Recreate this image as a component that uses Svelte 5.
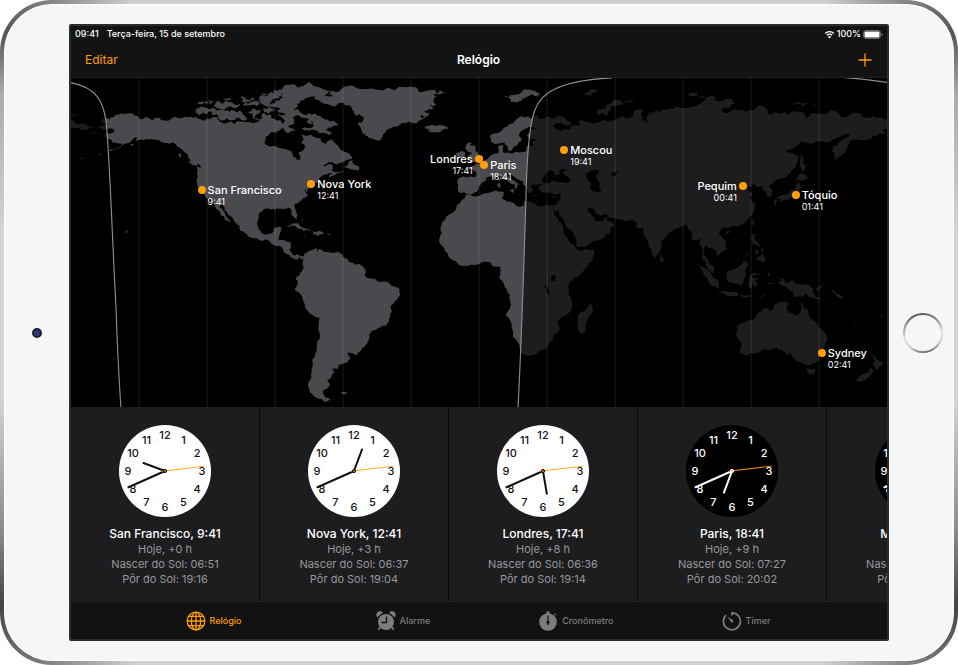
<script lang="ts">
	type City = {
		name: string;
		time: string;
		lon: number;
		lat: number;
		side: "left" | "right";
	}

	type Clock = {
		city: string;
		time: string;
		offset: string;
		sunrise: string;
		sunset: string;
		night?: boolean;
	}

	const cities: City[] = [
		{ name: "San Francisco", time: "9:41", lon: -122.4, lat: 37.8, side: "right" },
		{ name: "Nova York", time: "12:41", lon: -74, lat: 40.7, side: "right" },
		{ name: "Londres", time: "17:41", lon: -0.1, lat: 51.5, side: "left" },
		{ name: "Paris", time: "18:41", lon: 2.3, lat: 48.9, side: "right" },
		{ name: "Moscou", time: "19:41", lon: 37.6, lat: 55.8, side: "right" },
		{ name: "Pequim", time: "00:41", lon: 116.4, lat: 39.9, side: "left" },
		{ name: "Tóquio", time: "01:41", lon: 139.7, lat: 35.7, side: "right" },
		{ name: "Sydney", time: "02:41", lon: 151.2, lat: -33.9, side: "right" },
	]

	const clocks: Clock[] = [
		{ city: "San Francisco", time: "9:41", offset: "Hoje, +0 h", sunrise: "06:51", sunset: "19:16" },
		{ city: "Nova York", time: "12:41", offset: "Hoje, +3 h", sunrise: "06:37", sunset: "19:04" },
		{ city: "Londres", time: "17:41", offset: "Hoje, +8 h", sunrise: "06:36", sunset: "19:14" },
		{ city: "Paris", time: "18:41", offset: "Hoje, +9 h", sunrise: "07:27", sunset: "20:02", night: true },
		{ city: "Moscou", time: "19:41", offset: "Hoje, +10 h", sunrise: "06:02", sunset: "18:47", night: true },
	]

	const tabs = ["Relógio", "Alarme", "Cronômetro", "Timer"]
	let selected = $state("Relógio")

	// Map extent in degrees
	const TOP = 87.35
	const HEIGHT = 145.15
	const meridians = [-150, -120, -90, -60, -30, 0, 30, 60, 90, 120, 150]
	const hours = [1, 2, 3, 4, 5, 6, 7, 8, 9, 10, 11, 12]
	const SECOND = 83

	const left = (lon: number) => `${((lon + 180) / 360) * 100}%`
	const top = (lat: number) => `${((TOP - lat) / HEIGHT) * 100}%`
	const dialX = (h: number) => 37 * Math.sin((h * Math.PI) / 6)
	const dialY = (h: number) => -36 * Math.cos((h * Math.PI) / 6)
	const hourAngle = (time: string) => {
		const [h, m] = time.split(":").map(Number)
		return (h % 12) * 30 + m / 2
	}
	const minuteAngle = (time: string) => Number(time.split(":")[1]) * 6

	// Coastlines as "lon,lat" pairs
	const land = [
		// North and Central America
		"-168,65.6 -166,66.3 -162,66.2 -163.5,67 -166.5,68.3 -163,69.2 -161,70.3 -156.6,71.3 -152,70.8 -147,70.2 -141,69.7 -136,69 -133,69.6 -129,70 -127,70.2 -124,69.4 -120,69.4 -115,68.9 -114,68 -109,68 -108,67 -107,68 -104,68 -98,67.8 -97,68.5 -94,69 -96,70 -94.5,71.9 -92,71 -91.5,69.5 -90,69 -88,68.8 -87,67.3 -86,67.5 -85,69.5 -82,69.5 -81.5,68 -82,67 -84,66.3 -87,65.3 -88,64.2 -91,63.5 -94,61.5 -94.7,58.8 -92.5,57 -88,56.5 -83,55.2 -82.2,53 -80.5,51.3 -79.2,51.2 -78.8,53 -79.5,54.7 -77,56 -76.6,57.2 -78.5,58.8 -77.5,60 -78,62.4 -74,62.3 -70,61 -69.5,59 -67.5,58.3 -65,60.2 -63.5,58.8 -62,57 -60,55 -57.2,53.8 -55.8,52.2 -58.5,51.3 -60,50.2 -66.5,50.2 -69,48.5 -67,48.9 -65,49.2 -64.5,47.8 -65,46.8 -64,46 -61.3,45.4 -60,46.8 -60,45.9 -63.5,44.6 -65.8,43.5 -66.2,44.4 -64.8,45.3 -67,45 -70,43.7 -70.8,42.6 -70,41.8 -71.5,41.4 -74,40.7 -74.1,39.7 -75.2,38.7 -76,37 -76.3,39 -76.6,37 -75.7,35.3 -78,33.9 -81,32 -81.4,30.5 -80.1,27 -80.4,25.2 -81.7,26 -82.8,27.8 -82.7,29 -84,30.1 -85.5,29.8 -89.5,30.2 -89.3,29.2 -91.5,29.4 -94.5,29.5 -97.2,27.7 -97.5,25 -97.8,22.4 -96.2,19.2 -94.5,18.2 -92,18.6 -90.7,19.5 -90.4,21 -88,21.6 -86.9,21.4 -87.6,19.5 -88.2,17.5 -88.7,15.8 -86,15.9 -83.2,15 -83.7,11.5 -82.2,9.2 -79.8,9.5 -77.5,8.6 -78,7.2 -79,8.8 -80,7.4 -80.8,7.3 -83,8.3 -84.7,9.7 -85.8,10.3 -87.5,13 -91.5,14 -94,16.1 -96.5,15.7 -99.8,16.8 -102,17.9 -105.4,20 -105.5,22 -108.5,25.5 -112.2,29 -113,31.2 -114.8,31.7 -113,29 -111,25.6 -109.5,23.2 -112,24.8 -112.2,26 -114.2,27.2 -114,28 -115.7,29.5 -117.1,32.5 -118.5,34 -120.6,34.6 -122.4,37.5 -124.3,40.3 -124,43.5 -124,46.5 -124.7,48.4 -122.5,48 -124,49.5 -127.5,51 -128.5,53.5 -130.3,54.8 -131,56 -133,57 -135,59 -137.5,58.8 -141,59.9 -145,60.4 -148,60 -151.5,59.3 -150.5,61 -152,61 -154,59 -158,57 -162,55.2 -164.8,54.6 -160,56 -157.3,58.7 -159,58.5 -162,58.7 -162,60 -165.5,61.5 -164.5,63.1 -161,63.6 -161,64.6 -166,64.5",
		// Arctic Archipelago
		"-117,69.9 -113,68.6 -109,68.7 -105,69 -101.5,69.5 -104,71 -105,72.8 -108,73 -110,72.5 -114,73.2 -118,72.5 -117,71 -112,70.5",
		"-125,72 -123,71.2 -120,71.6 -116,73 -117.5,74.2 -121,74.5 -124.5,74",
		"-89,71 -87,70 -82,69.8 -77,69.6 -73,67.9 -73,66 -78,65.3 -77,64.3 -73,64.5 -70,63 -66,62 -65,63 -68,64.2 -65,65.5 -62,66.7 -67,69 -70,70.6 -75,71.8 -80,73.6 -85,73.7 -89,73.2 -85,72",
		"-97,71.7 -99,70 -96,69 -99,69 -102,72 -100,73.8 -96,73.5",
		"-95,72.2 -92,72.7 -90,73.8 -95,74",
		"-92,74.6 -80,74.7 -80,75.8 -89,76.4 -97,76.7 -92,75.8",
		"-90,76.5 -79,76.2 -77,78 -75,79 -67,80.5 -61,82.3 -70,83.1 -80,83 -87,82.2 -91,81.5 -86,80.5 -87,79 -85,78 -89,77.5",
		"-97,78.2 -88,78.5 -87,80 -92,81.2 -96,80.5 -93,79.5",
		"-117,75.3 -111,74.5 -106,75 -105.5,76 -109,76.6 -113,76 -116,76.6",
		"-124,76 -117,76.5 -120,77.5 -116,77.6 -122,77",
		"-104,75.2 -98,75 -97,76.4 -101,76.6",
		"-113,78.3 -109,78.1 -110,78.7",
		"-104,78.2 -99,78 -100,78.8 -105,79.3",
		"-105,77.3 -101,77.6 -104,78",
		"-98,77.6 -93,77.5 -95,78",
		"-87,65.8 -84.5,63 -80.5,64 -84,65.8",
		"-76,68.3 -73,67.8 -75,67.2",
		"-59.3,47.8 -55.8,47 -53,46.7 -53,48.5 -55.8,49.8 -55.6,51.5 -57.3,50.5",
		"-64.5,49.9 -61.8,49.2 -63,49.3",
		"-123.5,48.4 -125.5,48.9 -128.2,50.7 -125.5,50.2",
		"-133,54 -131.5,52.2 -131.5,54",
		"-154.5,57.3 -152.2,57.6 -153,58.3",
		"-168.5,53.2 -166.2,54 -167,53.3",
		"-171,63.6 -169,63.1 -171.5,63.2",
		"-176.5,51.7 -174,52.2 -174,52",
		// Greenland
		"-73,78.2 -68,76 -62,76.2 -58,75.3 -55,72.5 -54.5,70.8 -51,70.4 -51,69 -53.6,67.5 -52,64.5 -50,62 -48,60.8 -43.5,59.9 -42.5,62 -40,65 -36,66 -31,68.1 -25,69 -22,70.3 -26,70.8 -22,71.8 -24,73 -20,74 -22,75.2 -19,76 -20,77.6 -18,79.7 -20,80.3 -14,81.5 -22,82 -30,83.5 -40,83.1 -50,82.4 -62,81.3 -66,80.2 -64,79.2",
		// Caribbean
		"-84.8,21.9 -82.5,23.1 -79.5,22.8 -74.2,20.2 -77.5,19.9 -78,20.8 -82,22.4",
		"-73.8,19.9 -70,19.8 -68.4,18.6 -71,17.8 -74.3,18.4 -72.5,18.8",
		"-78.3,18.4 -76.3,18.1 -77.2,17.8",
		"-67.2,18.4 -65.7,18.3 -66,18",
		"-78.3,25 -77.8,24 -77.6,24.8",
		"-156,20.2 -155,19.5 -155.8,19",
		// South America
		"-77.5,8.6 -75.5,10.6 -74,11.3 -71.7,12.4 -71.5,10.5 -70,12 -68,10.6 -66,10.5 -62,10.7 -60,8.5 -57,6 -52,4.8 -50,1.5 -50.5,0 -48,-1 -44,-2.6 -40,-2.9 -37,-4.9 -35.3,-5.4 -34.8,-8 -37,-11 -39,-13 -39.3,-18 -41,-22 -44.5,-23 -48.5,-26 -48.7,-28.5 -50.5,-31 -52,-33 -54.5,-34.9 -58.3,-34 -57.2,-35.5 -56.8,-36.5 -58,-38.2 -62,-39 -62.3,-40.8 -65,-41 -63.7,-42.6 -65.5,-45 -67.5,-46.3 -65.8,-47.8 -69,-51 -68.3,-52.5 -68,-53.5 -65.2,-54.7 -68,-55.5 -71.5,-53.8 -74.5,-51.5 -75.5,-48 -74,-45 -73.8,-42 -73.3,-39 -73.6,-37 -71.5,-33 -71.5,-30 -70.3,-25 -70.3,-18.4 -75.8,-15 -77,-12 -79.8,-7 -81.3,-5.5 -80,-3.3 -80.9,-1 -78.8,1.5 -77.3,4 -77.5,7",
		"-61,-51.6 -58,-51.4 -59,-52.2",
		// Eurasia
		"25.5,71 31,70.2 33,69.3 41,67.6 40,66.3 33,66.6 34.8,64.4 37,63.9 37,65 40,64.6 40.5,66 44,66 44,68.4 46.5,68 53.5,68.3 60,68.8 61,69.8 65,69.2 69,68.8 67,70 68,72.5 72.5,72.8 72,69 74,67.5 74,70 75,72.2 80,72.4 81,73.6 87,75 98,76.3 104,77.6 113,76 107,73.3 113,73.7 119,73 127,73.5 129,71.3 133,71.7 140,72.6 150,71.6 160,69.8 170,69.7 171,70 176,69.8 180,69 180,65 177.5,64.7 179,62.5 174,61.8 170,60 164,59.9 163,57.8 162,56 160,53 156.8,51.1 155.7,55 156,57 160,60 163.5,62.4 160,61.8 155,59.3 149,59.5 142,59.2 138,56 135.2,54.8 141,53 140.5,50 138,46.5 135,43.5 131,42.7 129.7,41 127.5,39.7 129.3,37 129,35.2 126.5,34.5 126.7,37 125,38 125,39.6 121.5,39 122,40.6 118,39.1 119,37.4 122.5,37.3 119.4,35 121.8,31.8 121.9,29.5 119,25.5 116.5,23 113,22 110.5,21.3 108,21.6 105.8,19 108.8,15.5 109.2,12 106.8,10.4 104.8,8.7 105,10 102.5,12.2 100.9,12.8 100,13.4 99.3,9.5 101,6.8 103.4,4.3 104.2,1.3 103.4,1.4 101,3 100.3,6 98.3,8.3 98.7,11.5 97.6,16.5 94.4,16 94,18.8 91.8,22.4 89,21.8 86.8,21 85,19.5 82.2,16.7 80.2,15.5 80.2,12 79.3,10 77.5,8.1 76.2,10.5 74.7,13.5 73,17.5 72.7,21 70.5,20.9 69,22.3 70,23 67.3,24.8 61.5,25.1 57.3,25.8 56.5,27.1 54,26.6 51.5,27.9 50,30 48,30 48.3,28.3 50.1,26.5 50.8,24.8 51.4,26 51.6,24.2 54,24.1 56.3,26.2 56.5,24.5 59.8,22.5 58,20 57.5,18.8 55,17 52,15.6 45,12.8 43.4,12.8 42.7,16.5 39.2,21 37,25 34.8,29.3 34.3,27.9 32.4,30 32.3,31.2 34.2,31.3 35.1,33 36,35.8 36,36.8 32.5,36.1 30.6,36.8 28,36.7 26.4,38.5 26.5,40 29,41 33,42 36,41.6 38,41 41.5,41.5 39,44 37,45.3 39.2,47.1 35,46.3 36.5,45.4 33.7,44.4 32.6,45.4 33.5,46.1 31,46.6 28.7,44 27.8,42.5 29,41.2 26.5,40.6 23.5,40.3 22.9,39.2 24,38 22.9,36.6 21.5,37 21.2,38.5 19.4,40.5 19.4,41.8 16,43.5 14,45 13.7,45.6 12.3,45.3 12.5,44 14,42.6 16,41.8 18.4,40.1 17,40.5 16.5,38.8 15.7,38 16,40 14,40.9 10.5,42.8 8.8,44.4 7,43.6 3.2,43.2 3,41.9 -0.2,39.5 -0.5,38 -2,36.8 -5.5,36.1 -6.5,37 -8.9,37 -9.4,38.8 -8.8,43.2 -2,43.4 -1.3,44.5 -1.2,46 -4.6,48 -1.5,48.7 -1.7,49.7 1.5,50.2 2,51 4,51.8 5,53.2 8.5,53.8 8.2,57 10.6,57.6 10.5,55.5 11,54.1 14.2,53.9 18.7,54.6 21,55.2 21.3,57.5 24,57.2 23.6,59.2 30,59.9 25,60.1 22,60.5 21.4,62.5 25.2,65 22,65.7 17.5,62 18.8,60 16.5,57.5 14.3,55.5 12.8,55.5 11.2,59 9,58.5 7,58 5.2,59.5 5,62 9.5,63.6 13,66.5 16,68.7 20,69.9",
		"-180,69 -175,67.3 -170,66 -173,64.4 -177,65.5 -180,65",
		// European and Russian islands
		"-5.5,50 -3.5,50.3 1.3,51 1.7,52.7 0.2,53 -1.5,55 -2,57.6 -4,57.7 -3.1,58.6 -5,58.6 -6.2,56.7 -4.8,54.8 -3,54 -4.5,53.2 -5.2,51.8 -3,51.5",
		"-10,51.8 -6.4,52.2 -6,54.5 -7.5,55.3 -10,54.2",
		"-24,65.5 -22,66.4 -16,66.5 -13.6,65 -18,63.4 -22.6,63.9 -22,64.8",
		"11,79 14,77 17,76.6 20,78.5 27,80.1 18,80.3 15,79.8",
		"52,71.2 56,70.7 57,72.5 61,75.2 68.5,76.8 66,77 58,76 53.5,73.5",
		"46,80.6 50,80.3 54,80.8 48,81",
		"92,79.5 98,78.8 105,78.5 102,79.4 96,81.1",
		"137,75.5 143,74.9 150,75 146,75.7 139,76",
		"140,73.5 143,73.3 142,73.8",
		"178.7,71 180,70.9 180,71.5",
		"-180,71.5 -177.6,71.2 -180,70.9",
		"142,54.2 143.2,52 143,49.2 144.5,49 142.7,46 142,48 141.8,52",
		"8.2,40.8 9.6,41 9.5,39.2 8.5,39",
		"8.7,42.5 9.4,42.8 9.3,41.5",
		"12.5,38 15.5,38.2 15.1,36.7",
		"23.6,35.5 26.2,35.2 24,35.1",
		"32.4,35 34.4,35.6 33.2,34.7",
		// Japan
		"140,42.5 141.8,45.4 145.2,43.5 143.2,42 141,42.5 140.2,41.5",
		"141,41.4 142,39.6 140.9,36 140,35 137,34.6 135.8,33.5 132.5,34.2 131,34.2 135.5,35.6 137.2,37.3 139.5,38.2 140,40.5",
		"130,33.5 131.8,33.5 131,31.3 130.2,31.5",
		"132.5,33.5 134.6,34.1 133.5,33",
		// Africa
		"-5.9,35.8 -2,35.1 5,36.8 10,37.3 11,36.8 10.2,34 15,32.3 18,30.4 20,31 20,32.7 23,32.6 29,30.9 32.3,31.2 32.5,29.9 35.5,24 37.2,21 37.5,18.5 39.7,15.2 43,12 43.3,11.5 51.2,11.9 50.8,9.5 47.9,4.3 42,-1 39.3,-4.8 39.5,-8 40.6,-11 40.6,-15 35,-19.8 35.5,-23.8 32.8,-25.8 32.5,-28.4 30,-31.5 25.7,-34 20,-34.8 18.3,-34 18,-32 15,-26.8 14.4,-22.6 11.8,-17.5 13.7,-11 12.2,-6 9,-1 9.6,2.3 9.5,4 6,4.3 4.3,6.3 1,5.9 -2,4.8 -7.5,4.4 -13,8 -15,11 -17.3,14.7 -16.3,19 -17,21 -14.5,26 -10,29.5 -9.7,31.5 -6.8,34",
		"49.3,-12 50.4,-15.8 47.2,-25 45,-25.5 43.5,-22 44.3,-16.5 47,-15.3",
		// Southern and Southeast Asia
		"79.8,9.5 81.8,7.5 81,6 80,6.2",
		"95.3,5.6 98,4.2 103.5,-0.8 106,-3 105.8,-5.9 102.3,-4 98.7,1.7",
		"105.2,-6.8 108.5,-6.6 112.7,-6.9 114.5,-7.8 114.3,-8.7 108,-7.8",
		"115,-8.2 119,-8.4 122.8,-8.3 120,-9 116,-9",
		"123.5,-10.3 125,-8.8 127.2,-8.4 125,-9.6",
		"109,1.5 111.3,2.6 113,3.2 116.8,7 119,5.2 117.6,3 117.8,0.8 116.2,-3.8 114,-3.5 110.2,-2.9",
		"119.8,0.5 121,1.3 125,1.5 123.8,0.5 120.5,0.4 121,-1 123.3,-0.8 121.5,-2 122.8,-4.3 121.5,-4.5 120.8,-2.8 120.3,-5.5 119.4,-5.3 119,-2.8",
		"127.6,1.7 128.6,0.8 128,-0.8 127.6,0",
		"126.2,-3.2 128,-2.9 130.8,-3.4 128,-3.6",
		"131,-0.8 134,-0.8 135,-3.3 138,-1.6 144.5,-3.9 147.8,-6 147,-6.8 150.8,-10.5 147,-9.6 143.8,-7.6 143,-9.2 141,-9.1 138,-8.3 138.8,-7 135.5,-4.5 133,-4 132,-2.6 134,-2.2",
		"148.5,-5.8 151.8,-4.3 152.2,-4.4 150,-6.3",
		"151,-2.7 153,-4.5 152.2,-3.4",
		"154.7,-5.5 157,-7 161,-9.5 160.5,-9.8 156,-7.2",
		"164,-20.2 167,-22.3 166,-22",
		"177.3,-17.5 178.6,-17.6 178,-18.3",
		"120.5,18.5 122.2,18.4 121.6,16 124,12.8 122,14 120.6,14 119.9,16.3",
		"122,11.8 123.2,11.3 123,9.2 122,10.5",
		"124.4,12.5 125.5,12.2 125,10.2",
		"122,7.7 125.5,9.8 126.4,7.5 125.5,5.8 124,6.8",
		"117.2,8.4 119.5,11.3 119,10",
		"108.7,19.3 111,19.9 109.6,18.2",
		"120.1,23.5 121.8,25.2 120.9,22",
		// Australia and New Zealand
		"113.7,-22.5 114.2,-21.8 117,-20.7 121,-19.5 122.3,-18 123,-16.5 125.5,-14.2 128,-15 129.7,-14.8 130.8,-12.3 132.6,-11.4 136.7,-12 135.5,-14.8 139,-17.3 140.8,-17.5 142.5,-10.8 143.7,-14.3 145.3,-15 146.2,-18.8 149,-20.5 151,-23.5 153.2,-26 153.6,-28.5 152,-32.5 150,-37.2 146.5,-39 143.5,-38.8 140.5,-38 138.5,-35.6 138,-34.5 137,-35.2 137.8,-32.8 135.5,-34.8 134,-32.8 131,-31.5 126,-32.3 123.5,-33.9 120,-34 117.8,-35 115,-34.3 115.7,-31.8 113.5,-26.2 114,-24",
		"144.7,-40.8 148.3,-41 147.8,-43.2 146,-43.6",
		"172.8,-34.5 175.5,-36.8 178.5,-37.7 176.8,-40 175.2,-41.6 173.8,-39.4 174.7,-37.5",
		"172.7,-40.6 174.2,-41.7 172.8,-43.8 170.7,-45.8 168.5,-46.6 166.5,-46 171,-42.8",
	]

	const caspian = "47,45 49,46.3 51,47 53,46.5 53,45 51,44.5 52.5,42 54,41 53,39.8 53.8,37 50,37.3 49,38.5 49.5,40.5 47.5,43"
	const lakes = [
		"59,46 61.5,46.3 60.5,44.2 58.5,44",
		"32,0.2 34,0.2 33.5,-2.4 32,-2",
		"29.3,-3.5 30.8,-8.4 30.4,-8.5 29.1,-5",
	]

	// Breaks straight runs of coast into small bays and capes, rougher in the far north
	const roughen = (line: string) => {
		let points = line.split(" ").map(pair => pair.split(",").map(Number))
		for (let pass = 0; pass < 2; pass++) {
			points = points.flatMap(([x, y], i) => {
				const [nx, ny] = points[(i + 1) % points.length]
				if (Math.abs(x) === 180 && x === nx) return [[x, y]]
				const noise = Math.sin(x * 12.9 + y * 78.2 + nx * 37.7 + ny * 9.1)
				const bend = noise * (y > 68 ? 0.26 : 0.14)
				return [[x, y], [(x + nx) / 2 - (ny - y) * bend, (y + ny) / 2 + (nx - x) * bend]]
			})
		}
		return points.map(([x, y]) => `${x.toFixed(2)},${y.toFixed(2)}`).join(" ")
	}

	const coasts = land.map(roughen)
	const seas = [caspian, ...lakes].map(roughen)
</script>

{#snippet coast()}
	<g transform="scale(1 -1)">
		{#each coasts as points}
			<polygon {points} />
		{/each}
	</g>
{/snippet}

<div class="tablet">
	<div class="bezel">
		<div class="side"><span class="camera"></span></div>

		<main class="screen">
			<div class="status">
				<span>09:41</span>
				<span>Terça-feira, 15 de setembro</span>
				<span class="power">
					<svg width="11" height="9" viewBox="0 0 11 9" aria-hidden="true">
						<path d="M1 3.4a6.4 6.4 0 0 1 9 0M2.8 5.3a3.8 3.8 0 0 1 5.4 0" fill="none" stroke="#fff" stroke-width="1.3" />
						<path d="M5.5 8.4 3.9 6.7a2.3 2.3 0 0 1 3.2 0z" fill="#fff" />
					</svg>
					100%
					<svg width="20" height="9" viewBox="0 0 20 9" aria-hidden="true">
						<rect x=".5" y=".5" width="17" height="8" rx="2" fill="none" stroke="#66666a" />
						<rect x="1.5" y="1.5" width="15" height="6" rx="1" fill="#fff" />
						<path d="M18.5 3v3q1.2-.5 1.2-1.5T18.5 3" fill="#77777a" />
					</svg>
				</span>
			</div>

			<header>
				<button class="edit">Editar</button>
				<h1>Relógio</h1>
				<button class="add" aria-label="Adicionar">
					<svg width="14" height="14" viewBox="0 0 14 14">
						<path d="M7 .5v13M.5 7h13" stroke="currentColor" stroke-width="1.3" />
					</svg>
				</button>
			</header>

			<section class="map">
				<svg class="world" viewBox="-180 -87.35 360 145.15" aria-hidden="true">
					<defs>
						<clipPath id="day">
							<path d="M-180-88V-85.3C-168-83-165.8-76-164.6-68.8C-163-55-162-20-160.1 15C-159.5 35-158.5 50-158 58H17.2C18.5 35 19 20 20.7-33.5C21-50 22-62 23.4-68.8C25-78 30-86 58.7-88z" />
						</clipPath>
					</defs>
					<g fill="#1d1d1f">{@render coast()}</g>
					<g fill="#4a494e" clip-path="url(#day)">{@render coast()}</g>
					<g transform="scale(1 -1)">
						{#each seas as points}
							<polygon {points} />
						{/each}
					</g>
					{#each meridians as lon}
						<path d="M{lon}-88V58" stroke="#fff" stroke-opacity=".11" stroke-width=".45" />
					{/each}
					<g fill="none" stroke="#8e8e8e" stroke-width=".5">
						<path d="M-180-85.3C-168-83-165.8-76-164.6-68.8C-163-55-162-20-160.1 15C-159.5 35-158.5 50-158 58" />
						<path d="M17.2 58C18.5 35 19 20 20.7-33.5C21-50 22-62 23.4-68.8C25-78 30-86 58.7-87.4" />
						<path d="M150-88.2Q166-87.6 180-85.4" />
					</g>
				</svg>

				{#each cities as city}
					<div class="pin {city.side}" style:left={left(city.lon)} style:top={top(city.lat)}>
						<div class="label">
							<b>{city.name}</b>
							<span>{city.time}</span>
						</div>
					</div>
				{/each}
			</section>

			<section class="cards">
				{#each clocks as clock}
					<article>
						<svg class="dial" class:night={clock.night} viewBox="-46 -46 92 92" aria-hidden="true">
							<circle r="46" />
							{#each hours as h}
								<text x={dialX(h)} y={dialY(h) + 4}>{h}</text>
							{/each}
							<g class="hands">
								<path d="M0 0V-23" transform="rotate({hourAngle(clock.time)})" />
								<path d="M0 0V-40" transform="rotate({minuteAngle(clock.time)})" />
							</g>
							<path class="second" d="M0 3V-40" transform="rotate({SECOND})" />
							<circle class="hub" r="1.6" />
						</svg>
						<h2>{clock.city}, {clock.time}</h2>
						<p>{clock.offset}</p>
						<p>Nascer do Sol: {clock.sunrise}</p>
						<p>Pôr do Sol: {clock.sunset}</p>
					</article>
				{/each}
			</section>

			<nav>
				{#each tabs as tab}
					<button class:active={selected === tab} onclick={() => selected = tab}>
						<svg width="20" height="20" viewBox="0 0 20 20" aria-hidden="true">
							{#if tab === "Relógio"}
								<g fill="none" stroke="currentColor" stroke-width="1.3">
									<circle cx="10" cy="10" r="8.8" />
									<ellipse cx="10" cy="10" rx="4.6" ry="8.8" />
									<path d="M10 1v18M1 10h18M2.6 5.4h14.8M2.6 14.6h14.8" />
								</g>
							{:else if tab === "Alarme"}
								<g fill="currentColor">
									<circle cx="10" cy="11" r="8" />
									<path d="M1.3 6.2A3.3 3.3 0 0 1 6.9 1.6zM18.7 6.2A3.3 3.3 0 0 0 13.1 1.6z" />
									<path d="M4 16l-1.6 2.9M16 16l1.6 2.9" stroke="currentColor" stroke-width="1.6" />
								</g>
								<path d="M10.5 5.5v6H5.5" fill="none" stroke="#121212" stroke-width="1.4" />
							{:else if tab === "Cronômetro"}
								<g fill="currentColor">
									<circle cx="10" cy="11" r="8.8" />
									<path d="M8.3.5h3.4v2.5H8.3zM16 3.4l1-1 1.1 1.1-1 1z" />
								</g>
								<path d="M10 4.5v9.5" stroke="#121212" stroke-width="1.2" />
								<circle cx="10" cy="11.2" r="1.5" fill="#121212" />
							{:else}
								<g fill="none" stroke="currentColor" stroke-width="1.7">
									<path d="M10 4.5V1.8A8.5 8.5 0 1 1 4 4.2" />
								</g>
								<path d="M5.6 5.6l5.6 3.9a1.4 1.4 0 0 1-1.8 1.9z" fill="currentColor" />
							{/if}
						</svg>
						{tab}
					</button>
				{/each}
			</nav>
		</main>

		<div class="side end"><button class="home" aria-label="Início"></button></div>
	</div>
</div>

<style>
	:global(body) {
		margin: 0;
		background: #fff;
	}

	.tablet {
		padding: 4px;
		border-radius: 52px;
		background:
			linear-gradient(to right, transparent 0 3%, #8a8a8c 6%, #cfcfd1 14% 86%, #8a8a8c 94%, transparent 97%),
			linear-gradient(to bottom, #777, #555 5%, #aaa 14%, #d4d4d6 35% 60%, #8a8a8a 80%, #444 91%, #777);
		font-family: Inter, Roboto, "Liberation Sans", sans-serif;
		color: #fff;
	}

	.bezel {
		display: grid;
		grid-template-columns: 64px minmax(0, 1fr) 64px;
		padding: 19px 0;
		border: 1px solid #fff;
		border-radius: 48px;
		background: #f4f6f8;
	}

	.side {
		display: flex;
		align-items: center;
		justify-content: center;
	}

	.end {
		padding-left: 4px;
	}

	.camera {
		width: 6px;
		height: 6px;
		border: 2px solid #1d1f2c;
		border-radius: 50%;
		background: #2c3c78;
	}

	.home {
		width: 40px;
		height: 40px;
		padding: 0;
		border: 2px solid transparent;
		border-radius: 50%;
		background:
			linear-gradient(#f4f6f8, #f4f6f8) padding-box,
			linear-gradient(170deg, #3c3c3e, #8a8a8c 25%, #e2e2e4 55%, #cfcfd1 75%, #4c4c4e) border-box;
	}

	.screen {
		overflow: hidden;
		border: 2px solid #2b2d2d;
		border-radius: 2px;
		background: #131313;
	}

	button {
		font: inherit;
		cursor: pointer;
	}

	.status {
		display: flex;
		gap: 8px;
		padding: 0 4px;
		font-size: 9px;
		font-weight: 500;
		line-height: 16px;
	}

	.power {
		display: flex;
		align-items: center;
		gap: 2px;
		margin-left: auto;
	}

	header {
		display: grid;
		grid-template-columns: 1fr auto 1fr;
		align-items: center;
		height: 35px;
		padding: 0 15px 0 14px;
		border-bottom: 1px solid #1f1f1f;
	}

	header button {
		padding: 0;
		border: 0;
		background: none;
		color: #ff9f0a;
		font-size: 12px;
	}

	.edit {
		justify-self: start;
	}

	.add {
		display: flex;
		justify-self: end;
	}

	h1 {
		margin: 0;
		font-size: 12px;
		font-weight: 600;
	}

	.map {
		position: relative;
		background: #000;
	}

	.world {
		display: block;
		width: 100%;
	}

	.pin {
		position: absolute;
		width: 8px;
		height: 8px;
		margin: -4px 0 0 -4px;
		border-radius: 50%;
		background: #ff9f0a;
	}

	.label {
		position: absolute;
		top: -2px;
		left: 10px;
		font-size: 9px;
		line-height: 11px;
		white-space: nowrap;
	}

	.left .label {
		right: 10px;
		left: auto;
		text-align: right;
	}

	.label b {
		display: block;
		font-size: 11px;
		font-weight: 500;
		line-height: 12px;
	}

	.cards {
		display: flex;
		overflow: hidden;
		background: #1d1d1f;
	}

	article {
		box-sizing: border-box;
		flex: 0 0 189px;
		padding: 18px 0 14px;
		border-right: 1px solid #0b0b0c;
		text-align: center;
	}

	.dial {
		display: block;
		width: 92px;
		margin: 0 auto 9px;
		fill: #fff;
	}

	.dial text {
		fill: #111;
		font-size: 11px;
		font-weight: 500;
		text-anchor: middle;
	}

	.hands {
		stroke: #111;
		stroke-width: 2;
		stroke-linecap: round;
	}

	.second {
		stroke: #ff9f0a;
		stroke-width: 1;
	}

	.dial .hub {
		fill: #b36b00;
		stroke: #111;
		stroke-width: 1;
	}

	.dial.night {
		fill: #000;
	}

	.night text {
		fill: #fff;
	}

	.night .hands {
		stroke: #fff;
	}

	.night .hub {
		fill: #ffd08a;
		stroke: #fff;
	}

	h2 {
		margin: 0;
		font-size: 12px;
		font-weight: 500;
		line-height: 16px;
	}

	p {
		margin: 0;
		color: #98989d;
		font-size: 11px;
		line-height: 15px;
	}

	nav {
		display: flex;
		justify-content: center;
		gap: 108px;
		height: 37px;
		padding-right: 2px;
		border-top: 1px solid #242426;
		background: #121212;
	}

	nav button {
		display: flex;
		align-items: center;
		gap: 4px;
		padding: 0;
		border: 0;
		background: none;
		color: #7d7d7f;
		font-size: 9px;
		font-weight: 500;
	}

	nav button:first-child {
		margin-right: 26px;
	}

	nav .active {
		color: #ff9f0a;
	}
</style>
